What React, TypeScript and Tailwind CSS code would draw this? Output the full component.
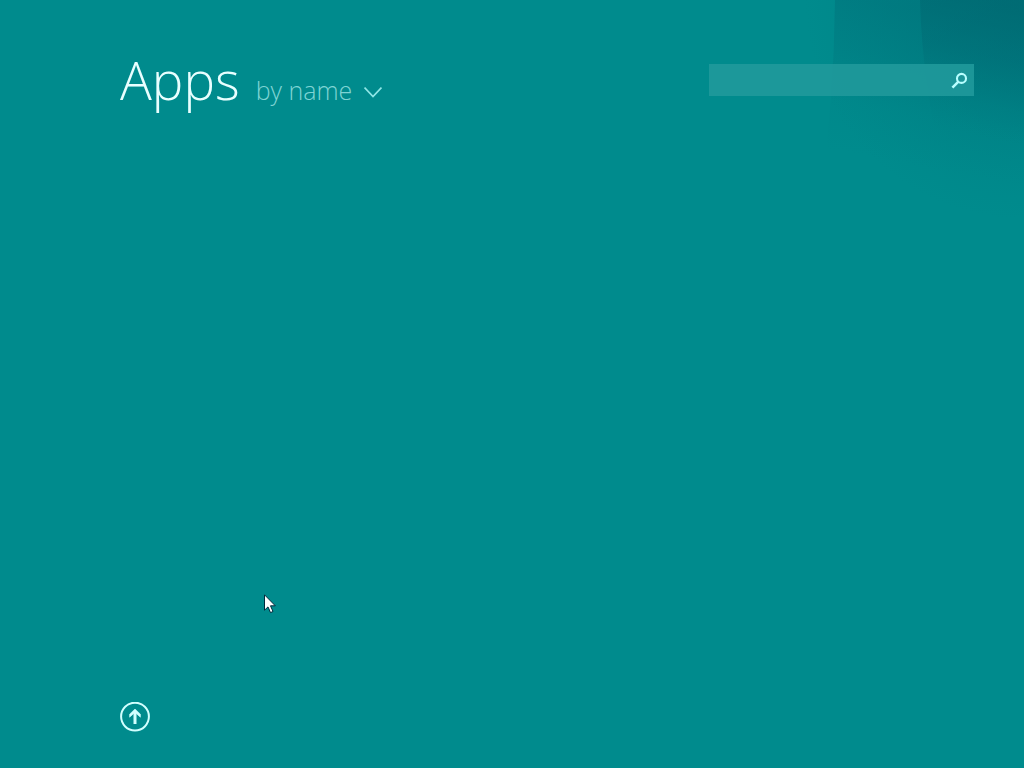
import React from "react";

function Backdrop() {
  return (
    <svg
      className="pointer-events-none absolute right-0 top-0"
      width="224"
      height="220"
      viewBox="0 0 224 220"
      aria-hidden="true"
    >
      <defs>
        <linearGradient id="outer" x1="0.2" y1="0" x2="0" y2="1">
          <stop offset="0" stopColor="#00757d" stopOpacity="0.62" />
          <stop offset="0.25" stopColor="#00787f" stopOpacity="0.45" />
          <stop offset="0.5" stopColor="#00787f" stopOpacity="0.12" />
          <stop offset="0.75" stopColor="#00787f" stopOpacity="0" />
        </linearGradient>
        <linearGradient id="inner" gradientUnits="userSpaceOnUse" x1="180" y1="0" x2="150" y2="130">
          <stop offset="0" stopColor="#00636d" stopOpacity="0.55" />
          <stop offset="0.4" stopColor="#006a74" stopOpacity="0.42" />
          <stop offset="0.75" stopColor="#007078" stopOpacity="0.1" />
          <stop offset="1" stopColor="#007078" stopOpacity="0" />
        </linearGradient>
        <radialGradient id="glow" gradientUnits="userSpaceOnUse" cx="224" cy="0" r="220">
          <stop offset="0" stopColor="#00636c" stopOpacity="0.28" />
          <stop offset="0.5" stopColor="#006a72" stopOpacity="0.2" />
          <stop offset="1" stopColor="#007078" stopOpacity="0" />
        </radialGradient>
      </defs>
      <path d="M35 0H224V200H20Q34 100 35 0Z" fill="url(#outer)" />
      <path d="M120 0H224V200H150Q122 90 120 0Z" fill="url(#inner)" />
      <path d="M0 0H224V220H0Z" fill="url(#glow)" />
    </svg>
  );
}

function Header() {
  return (
    <header className="relative flex items-start justify-between pl-[120px] pr-[50px] pt-12">
      <div className="flex items-baseline gap-4">
        <h1 className="text-[53px] font-light leading-[64px] text-[#e8ffff]">Apps</h1>
        <button
          type="button"
          aria-haspopup="listbox"
          className="flex items-center gap-3 text-[25px] font-light leading-9 text-[#7fd4d4]"
        >
          by name
          <svg className="mt-1" width="18" height="12" viewBox="0 0 18 12" fill="none" aria-hidden="true">
            <path d="M0.5 1.5L9 10.5L17.5 1.5" stroke="#8fe6e6" strokeWidth="1.8" />
          </svg>
        </button>
      </div>
      <form role="search" className="mt-4 flex h-8 w-[265px] bg-[#1f999b]/90">
        <input
          type="text"
          aria-label="Search apps"
          className="min-w-0 flex-1 bg-transparent px-2 text-base text-white outline-none"
        />
        <button type="button" aria-label="Search" className="flex w-[30px] items-center justify-center">
          <svg width="18" height="18" viewBox="0 0 18 18" fill="none" aria-hidden="true">
            <circle cx="11.5" cy="7.4" r="4.5" stroke="#b8ffff" strokeWidth="2.1" />
            <path d="M8.4 10.6L2.4 16.6" stroke="#b8ffff" strokeWidth="2.6" />
          </svg>
        </button>
      </form>
    </header>
  );
}

function Pointer() {
  return (
    <svg
      className="pointer-events-none absolute left-[264px] top-[594px]"
      width="12"
      height="20"
      viewBox="0 0 12 20"
      aria-hidden="true"
    >
      <path
        d="M0.5 0.8V16.2L4 12.9L6.5 18.6L9 17.5L6.5 11.8H11.3Z"
        fill="#ffffff"
        stroke="#002a3c"
        strokeWidth="1"
      />
    </svg>
  );
}

export default function App() {
  return (
    <div className="relative flex min-h-screen flex-col overflow-hidden bg-[#008b8d] font-['Open_Sans','Noto_Sans',sans-serif]">
      <Backdrop />
      <Header />
      <main className="flex-1" />
      <footer className="relative pb-9 pl-[120px]">
        <button type="button" aria-label="Back to Start" className="block">
          <svg width="30" height="30" viewBox="0 0 30 30" fill="none" aria-hidden="true">
            <circle cx="15" cy="14.6" r="13.9" stroke="#d2ffff" strokeWidth="2" />
            <path d="M15 22V9" stroke="#d2ffff" strokeWidth="3" />
            <path d="M9.6 15.2V12.2L15 7L20.4 12.2V15.2L15 10.4Z" fill="#d2ffff" stroke="#d2ffff" strokeWidth="0.6" />
          </svg>
        </button>
      </footer>
      <Pointer />
    </div>
  );
}
